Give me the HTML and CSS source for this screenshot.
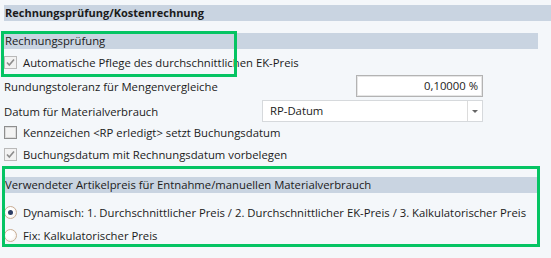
FILE: index.html
```html
<!DOCTYPE html>
<html lang="de">
<head>
    <meta charset="UTF-8">
    <title>Rechnungsprüfung/Kostenrechnung</title>
    <link rel="stylesheet" href="styles.css">
</head>
<body>
    <div class="page">
        <div class="title-bar">Rechnungsprüfung/Kostenrechnung</div>

        <section class="group group-invoice">
            <div class="group-bar">Rechnungsprüfung</div>
            <div class="row">
                <span class="check checked disabled">
                    <svg width="11" height="11" viewBox="0 0 11 11"><path d="M2 5.5 L4.3 8 L9 2.5" fill="none" stroke="#8c8c8c" stroke-width="1.6"/></svg>
                </span>
                <span>Automatische Pflege des durchschnittlichen EK-Preis</span>
            </div>
            <div class="row field-row">
                <span class="label">Rundungstoleranz für Mengenvergleiche</span>
                <span class="input number">0,10000 %</span>
            </div>
            <div class="row field-row">
                <span class="label">Datum für Materialverbrauch</span>
                <span class="select">
                    <span class="select-text">RP-Datum</span>
                    <span class="select-button"><span class="arrow"></span></span>
                </span>
            </div>
            <div class="row row-d">
                <span class="check"></span>
                <span>Kennzeichen &lt;RP erledigt&gt; setzt Buchungsdatum</span>
            </div>
            <div class="row row-e">
                <span class="check checked disabled">
                    <svg width="11" height="11" viewBox="0 0 11 11"><path d="M2 5.5 L4.3 8 L9 2.5" fill="none" stroke="#8c8c8c" stroke-width="1.6"/></svg>
                </span>
                <span>Buchungsdatum mit Rechnungsdatum vorbelegen</span>
            </div>
        </section>

        <section class="group group-price">
            <div class="group-bar">Verwendeter Artikelpreis für Entnahme/manuellen Materialverbrauch</div>
            <div class="row radio-row first">
                <span class="radio selected"></span>
                <span>Dynamisch: 1. Durchschnittlicher Preis / 2. Durchschnittlicher EK-Preis / 3. Kalkulatorischer Preis</span>
            </div>
            <div class="row radio-row">
                <span class="radio"></span>
                <span>Fix: Kalkulatorischer Preis</span>
            </div>
        </section>

        <!-- highlight frames -->
        <div class="mark mark-one"></div>
        <div class="mark mark-two"></div>
    </div>
</body>
</html>
```

FILE: styles.css
```css
body {
    margin: 0;
    padding: 0;
    background-color: #f4f7fa;
    font-family: "Open Sans", "Noto Sans", sans-serif;
    font-size: 11.3px;
    color: #1b1b1b;
}
.page {
    position: relative;
    width: 551px;
    height: 258px;
    padding-top: 5px;
    box-sizing: border-box;
    overflow: hidden;
}
.title-bar {
    height: 16px;
    line-height: 16px;
    margin-left: 4px;
    padding-left: 1px;
    background-color: #c9d4e1;
    font-size: 11px;
    font-weight: bold;
}
.group-invoice {
    margin-top: 12px;
}
.group-price {
    margin-top: 13px;
}
.group-bar {
    height: 16px;
    line-height: 16px;
    width: 533px;
    margin-left: 4px;
    padding-left: 1px;
    background-color: #c9d4e1;
    white-space: nowrap;
}
.row {
    display: flex;
    align-items: center;
    height: 20px;
    margin-top: 3px;
    padding-left: 4px;
    white-space: nowrap;
}
.field-row {
    display: grid;
    grid-template-columns: 258px 221px;
    height: 22px;
}
.row-d {
    margin-top: 0;
}
.row-e {
    margin-top: 2px;
}
.radio-row.first {
    margin-top: 9px;
}
.check {
    width: 11px;
    height: 11px;
    border: 1px solid #8e8e8e;
    background-color: #f3f3f3;
    box-shadow: inset 0 0 0 1px #dcdcdc;
    margin-right: 6px;
    display: flex;
    align-items: center;
    justify-content: center;
}
.check.disabled {
    border-color: #b9b9b9;
    background-color: #f2f2f2;
    box-shadow: none;
}
.input {
    justify-self: end;
    width: 125px;
    height: 20px;
    line-height: 20px;
    border: 1px solid #b3b3b3;
    background-color: #fff;
    box-shadow: inset 0 0 0 1px #e6e6e6;
    padding-right: 4px;
    box-sizing: content-box;
}
.number {
    text-align: right;
    width: 121px;
}
.select {
    display: flex;
    height: 20px;
    border: 1px solid #d6d9dc;
    background-color: #fff;
}
.select-text {
    flex: 1;
    line-height: 20px;
    padding-left: 7px;
}
.select-button {
    width: 14px;
    border-left: 1px solid #dcdcdc;
    display: flex;
    align-items: center;
    justify-content: center;
}
.arrow {
    width: 0;
    height: 0;
    border-left: 3px solid transparent;
    border-right: 3px solid transparent;
    border-top: 3px solid #666;
}
.radio {
    width: 11px;
    height: 11px;
    border: 1px solid #c9ad93;
    border-radius: 50%;
    background: radial-gradient(circle at 40% 40%, #ffffff 40%, #efe9e2 100%);
    margin-right: 6px;
    display: flex;
    align-items: center;
    justify-content: center;
}
.radio.selected::after {
    content: "";
    width: 5px;
    height: 5px;
    border-radius: 50%;
    background-color: #2d3d63;
}
.mark {
    position: absolute;
    border: 3px solid #05c463;
    box-sizing: border-box;
}
.mark-one {
    left: 1px;
    top: 31px;
    width: 236px;
    height: 46px;
}
.mark-two {
    left: 2px;
    top: 166px;
    width: 538px;
    height: 81px;
}
```
